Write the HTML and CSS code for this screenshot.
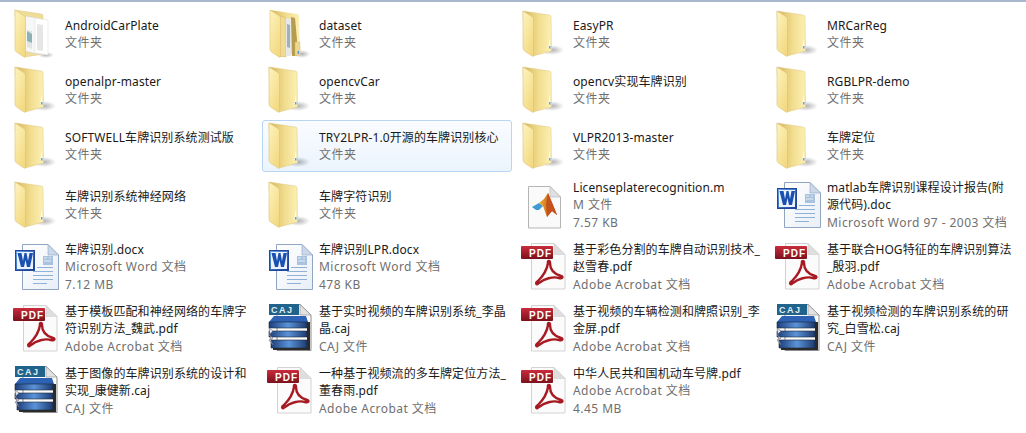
FILE: index.html
```html
<!DOCTYPE html>
<html lang="zh">
<head>
<meta charset="utf-8">
<title>车牌识别</title>
<link rel="stylesheet" href="styles.css">
</head>
<body>
<svg class="defs" width="0" height="0">
<defs>
<linearGradient id="ff" x1="0" y1="0" x2=".7" y2="1"><stop offset="0" stop-color="#fef4bf"/><stop offset="1" stop-color="#f3d981"/></linearGradient>
<linearGradient id="fi" x1="0" y1="0" x2="1" y2="0"><stop offset="0" stop-color="#d2b55a"/><stop offset=".55" stop-color="#f2dd8e"/><stop offset="1" stop-color="#fbf0b6"/></linearGradient>
<linearGradient id="bar" x1="0" y1="0" x2="0" y2="1"><stop offset="0" stop-color="#c92c3c"/><stop offset="1" stop-color="#7c101c"/></linearGradient>
<linearGradient id="wd" x1="0" y1="0" x2="1" y2="1"><stop offset="0" stop-color="#6aa5e8"/><stop offset="1" stop-color="#123f9c"/></linearGradient>
<linearGradient id="st" x1="0" y1="0" x2="1" y2="0"><stop offset="0" stop-color="#1d3f7c"/><stop offset=".5" stop-color="#5b93d8"/><stop offset="1" stop-color="#1c3a70"/></linearGradient>
<linearGradient id="ml" x1="0" y1="0" x2="1" y2="0"><stop offset="0" stop-color="#f0b030"/><stop offset="1" stop-color="#a8341a"/></linearGradient>
<linearGradient id="pg" x1="0" y1="0" x2="1" y2="1"><stop offset="0" stop-color="#ffffff"/><stop offset="1" stop-color="#e9eff7"/></linearGradient>
<radialGradient id="sh"><stop offset="0" stop-color="#000" stop-opacity=".3"/><stop offset="1" stop-color="#000" stop-opacity="0"/></radialGradient>

<symbol id="folder" viewBox="0 0 48 48" overflow="visible">
<ellipse cx="29" cy="40" rx="12" ry="5" fill="url(#sh)"/>
<path d="M0 1 L26 5 Q28 5 28 7 L28.500 41 L10 46 L0 8Z" fill="url(#fi)" stroke="#dcc680" stroke-width=".5"/>
<path d="M26.500 29 L27.500 38 L25.500 38Z" fill="#fff"/>
<rect x="26" y="36" width="1.500" height="2.500" fill="#5aa0e0"/>
<path d="M0 1 L8 6 Q10.500 7 10.500 9 L10.500 45 Q10.500 47 9 46 L1.500 41 Q0 40 0 38Z" fill="url(#ff)" stroke="#dcc377" stroke-width=".6"/>
</symbol>

<symbol id="folder-doc" viewBox="0 0 48 48" overflow="visible">
<ellipse cx="31" cy="45" rx="8" ry="3" fill="url(#sh)"/>
<path d="M0 0 L26 4 Q28 4 28 6 L28 44 L10 47 L0 6Z" fill="#efdc97" stroke="#dcc680" stroke-width=".5"/>
<path d="M10 6 L22 8 L22 44 L10 41Z" fill="#f7f7f7" stroke="#cfcfcf" stroke-width=".5"/>
<path d="M20 8 L33 10 L33 45 L20 43Z" fill="#fff" stroke="#dadada" stroke-width=".5"/>
<path d="M22 14 L28 15 L28 41 L22 40Z" fill="#e6e6e6"/>
<path d="M12 20 L17 21 L17 39 L12 37Z" fill="#e4e4e4"/>
<path d="M12 21 L17 24 L17 33 L12 31Z" fill="#8db2b6"/>
<path d="M0 0 L8 5 Q10.500 6 10.500 8 L10.500 46 Q10.500 48 9 47 L1.500 42 Q0 41 0 39Z" fill="url(#ff)" stroke="#dcc377" stroke-width=".6"/>
</symbol>

<symbol id="folder-set" viewBox="0 0 48 48" overflow="visible">
<ellipse cx="33" cy="44" rx="8" ry="4" fill="url(#sh)"/>
<path d="M1 0 L28 4 Q30 4 30 6 L31 43 L11 47 L1 6Z" fill="url(#fi)"/>
<path d="M11 6 L17 8 L17 47 L11 46Z" fill="#f0db91" stroke="#cfb560" stroke-width=".5"/>
<path d="M17 8 L22 9 L22 46 L17 46Z" fill="#e8e8e8"/>
<path d="M18 14 L21 15 L21 38 L18 37Z" fill="#9eb0b8"/>
<path d="M22 7 L26 8 L28 30 L28 46 L23 46Z" fill="#b59c4e"/>
<path d="M26 32 L31 32 L31 45 L26 46Z" fill="#eed88e" stroke="#cfb560" stroke-width=".4"/>
<rect x="28.500" y="41" width="1.500" height="3" fill="#5aa0e0"/>
<path d="M1 0 L9 5 Q11.500 6 11.500 8 L11.500 46 Q11.500 48 10 47 L2.500 42 Q1 41 1 39Z" fill="url(#ff)" stroke="#dcc377" stroke-width=".6"/>
</symbol>

<symbol id="word" viewBox="0 0 48 48" overflow="visible">
<path d="M7.500 1.500 H33 L43.500 12 V46.500 H7.500Z" fill="url(#pg)" stroke="#8fa5c2"/>
<path d="M33 1.500 V12 H43.500Z" fill="#cbd8e9" stroke="#8fa5c2" stroke-width=".6"/>
<rect x="28" y="13" width="10" height="9" fill="#a9c2de"/>
<path d="M29 15 h3 M34 15 h2 M29 18 h7" stroke="#e4edf6" stroke-width="1"/>
<path d="M22 24.500 H38 M18 28.500 H38 M18 32.500 H38 M18 36.500 H38 M18 40.500 H32" stroke="#8fb0d9" stroke-width="1"/>
<rect x=".5" y="7.500" width="19" height="20" fill="url(#wd)" stroke="#23489a"/>
<rect x="2" y="9" width="16" height="17" fill="#eaf2fb"/>
<path d="M2.500 10 L6 24 H9 L10.500 17 L12 24 H15 L18 10 H14.500 L13 18 L11.500 10 H9.500 L8 18 L6.500 10Z" fill="#1a50b0"/>
</symbol>

<symbol id="pdf" viewBox="0 0 48 48" overflow="visible">
<path d="M8.500 .5 H31 L42 11.500 V46 H8.500Z" fill="#fbfbfb" stroke="#d2d2d2"/>
<path d="M31 .5 V11.500 H42Z" fill="#dedede" stroke="#d2d2d2" stroke-width=".6"/>
<rect x="-2" y="3" width="32" height="13" rx="1" fill="url(#bar)"/>
<path d="M25 20 C24 17.500 27.500 17 27 20 C27 26 31 31 38 33 C41 34 39 36 36 35 C30 33 21 36 16 40 C13 43 12 40 15 38 C20 33 24 27 25 20Z" fill="none" stroke="#a81a22" stroke-width="2.400"/>
</symbol>

<symbol id="caj" viewBox="0 0 48 48" overflow="visible">
<path d="M8 -.5 H31 L42 10 V45.500 H8Z" fill="#fcfcfc" stroke="#8d8d8d"/>
<path d="M31 -.5 V10 H42Z" fill="#e2e2e2" stroke="#8d8d8d" stroke-width=".6"/>
<rect x="0" y="-1" width="30" height="11" fill="#20648c"/>
<path d="M0 17 L5 11 H37 L39 17Z" fill="#2e62b4"/>
<path d="M0 17 H38 V23 H0Z" fill="url(#st)" stroke="#1a2533" stroke-width=".6"/>
<path d="M0 26 H38 V32 H0Z" fill="url(#st)" stroke="#1a2533" stroke-width=".6"/>
<path d="M2 35 H38 V43 H2Z" fill="url(#st)" stroke="#1a2533" stroke-width=".6"/>
<path d="M0 23 L4 26 L0 30 L4 33 L0 35 L4 40 L2 36Z" fill="#dfe6ee" stroke="#667" stroke-width=".6"/>
<path d="M38 17 H41 V45 H4 V43 H38Z" fill="#2a2a2a"/>
</symbol>

<symbol id="matlab" viewBox="0 0 48 48" overflow="visible">
<path d="M5.500 5.500 H27 L37.500 16 V47 H5.500Z" fill="#fafafa" stroke="#b5b5b5"/>
<path d="M27 5.500 V16 H37.500Z" fill="#e0e0e0" stroke="#b5b5b5" stroke-width=".6"/>
<path d="M9 26 L16 22 L20 25 L16 29 L13 29Z" fill="#3f9ad6"/>
<path d="M16 22 L21 18 L25 12 L30 24 L34 34 L29 30 L24 36 L20 25Z" fill="url(#ml)"/>
<path d="M25 12 L23 24 L24 36 L29 30 L34 34 L30 24Z" fill="#c6521b"/>
</symbol>
</defs>
</svg>

<main class="view">
<div class="item"><svg class="ico"><use href="#folder-doc"/></svg><div class="txt"><div class="nm">AndroidCarPlate</div><div class="sub">文件夹</div></div></div>
<div class="item"><svg class="ico"><use href="#folder-set"/></svg><div class="txt"><div class="nm">dataset</div><div class="sub">文件夹</div></div></div>
<div class="item"><svg class="ico"><use href="#folder"/></svg><div class="txt"><div class="nm">EasyPR</div><div class="sub">文件夹</div></div></div>
<div class="item"><svg class="ico"><use href="#folder"/></svg><div class="txt"><div class="nm">MRCarReg</div><div class="sub">文件夹</div></div></div>

<div class="item"><svg class="ico"><use href="#folder"/></svg><div class="txt"><div class="nm">openalpr-master</div><div class="sub">文件夹</div></div></div>
<div class="item"><svg class="ico"><use href="#folder"/></svg><div class="txt"><div class="nm">opencvCar</div><div class="sub">文件夹</div></div></div>
<div class="item"><svg class="ico"><use href="#folder"/></svg><div class="txt"><div class="nm">opencv实现车牌识别</div><div class="sub">文件夹</div></div></div>
<div class="item"><svg class="ico"><use href="#folder"/></svg><div class="txt"><div class="nm">RGBLPR-demo</div><div class="sub">文件夹</div></div></div>

<div class="item"><svg class="ico"><use href="#folder"/></svg><div class="txt"><div class="nm">SOFTWELL车牌识别系统测试版</div><div class="sub">文件夹</div></div></div>
<div class="item sel"><svg class="ico"><use href="#folder"/></svg><div class="txt"><div class="nm">TRY2LPR-1.0开源的车牌识别核心</div><div class="sub">文件夹</div></div></div>
<div class="item"><svg class="ico"><use href="#folder"/></svg><div class="txt"><div class="nm">VLPR2013-master</div><div class="sub">文件夹</div></div></div>
<div class="item"><svg class="ico"><use href="#folder"/></svg><div class="txt"><div class="nm">车牌定位</div><div class="sub">文件夹</div></div></div>

<div class="item"><svg class="ico"><use href="#folder"/></svg><div class="txt"><div class="nm">车牌识别系统神经网络</div><div class="sub">文件夹</div></div></div>
<div class="item"><svg class="ico"><use href="#folder"/></svg><div class="txt"><div class="nm">车牌字符识别</div><div class="sub">文件夹</div></div></div>
<div class="item"><svg class="ico"><use href="#matlab"/></svg><div class="txt"><div class="nm">Licenseplaterecognition.m</div><div class="sub">M 文件</div><div class="sub">7.57 KB</div></div></div>
<div class="item"><svg class="ico"><use href="#word"/></svg><div class="txt"><div class="nm">matlab车牌识别课程设计报告(附<br>源代码).doc</div><div class="sub">Microsoft Word 97 - 2003 文档</div></div></div>

<div class="item"><svg class="ico"><use href="#word"/></svg><div class="txt"><div class="nm">车牌识别.docx</div><div class="sub">Microsoft Word 文档</div><div class="sub">7.12 MB</div></div></div>
<div class="item"><svg class="ico"><use href="#word"/></svg><div class="txt"><div class="nm">车牌识别LPR.docx</div><div class="sub">Microsoft Word 文档</div><div class="sub">478 KB</div></div></div>
<div class="item"><svg class="ico"><use href="#pdf"/><text x="6" y="13.500" class="bar-t">PDF</text></svg><div class="txt"><div class="nm">基于彩色分割的车牌自动识别技术_<br>赵雪春.pdf</div><div class="sub">Adobe Acrobat 文档</div></div></div>
<div class="item"><svg class="ico"><use href="#pdf"/><text x="6" y="13.500" class="bar-t">PDF</text></svg><div class="txt"><div class="nm">基于联合HOG特征的车牌识别算法<br>_殷羽.pdf</div><div class="sub">Adobe Acrobat 文档</div></div></div>

<div class="item"><svg class="ico"><use href="#pdf"/><text x="6" y="13.500" class="bar-t">PDF</text></svg><div class="txt"><div class="nm">基于模板匹配和神经网络的车牌字<br>符识别方法_魏武.pdf</div><div class="sub">Adobe Acrobat 文档</div></div></div>
<div class="item"><svg class="ico"><use href="#caj"/><text x="2" y="8" class="caj-t">CAJ</text></svg><div class="txt"><div class="nm">基于实时视频的车牌识别系统_李晶<br>晶.caj</div><div class="sub">CAJ 文件</div></div></div>
<div class="item"><svg class="ico"><use href="#pdf"/><text x="6" y="13.500" class="bar-t">PDF</text></svg><div class="txt"><div class="nm">基于视频的车辆检测和牌照识别_李<br>金屏.pdf</div><div class="sub">Adobe Acrobat 文档</div></div></div>
<div class="item"><svg class="ico"><use href="#caj"/><text x="2" y="8" class="caj-t">CAJ</text></svg><div class="txt"><div class="nm">基于视频检测的车牌识别系统的研<br>究_白雪松.caj</div><div class="sub">CAJ 文件</div></div></div>

<div class="item"><svg class="ico"><use href="#caj"/><text x="2" y="8" class="caj-t">CAJ</text></svg><div class="txt"><div class="nm">基于图像的车牌识别系统的设计和<br>实现_康健新.caj</div><div class="sub">CAJ 文件</div></div></div>
<div class="item"><svg class="ico"><use href="#pdf"/><text x="6" y="13.500" class="bar-t">PDF</text></svg><div class="txt"><div class="nm">一种基于视频流的多车牌定位方法_<br>董春雨.pdf</div><div class="sub">Adobe Acrobat 文档</div></div></div>
<div class="item"><svg class="ico"><use href="#pdf"/><text x="6" y="13.500" class="bar-t">PDF</text></svg><div class="txt"><div class="nm">中华人民共和国机动车号牌.pdf</div><div class="sub">Adobe Acrobat 文档</div><div class="sub">4.45 MB</div></div></div>
</main>
</body>
</html>
```
FILE: styles.css
```css
* { box-sizing: border-box; }
html, body { margin: 0; height: 100%; overflow: hidden; background: #fff; }
body { border-top: 2px solid #a9b7cc; font-family: "Noto Sans", "Noto Sans CJK SC", sans-serif; font-size: 12px; letter-spacing: .1px; }
.defs { display: block; height: 0; }
.view {
  display: grid;
  grid-template-columns: repeat(4, 250px);
  grid-template-rows: 52px 52px 52px 58px 58px 58px 58px;
  gap: 4px;
  padding: 6px 0 0 8px;
}
.item {
  display: flex;
  align-items: center;
  gap: 2px;
  padding-left: 6px;
  border: 1px solid transparent;
  border-radius: 3px;
}
.sel { border-color: #b8d6f4; background: linear-gradient(#fafcff, #ebf4fd); }
.ico { width: 48px; height: 48px; flex: none; overflow: visible; }
.txt { line-height: 17.5px; min-width: 0; white-space: nowrap; }
.nm { color: #1a1a1a; }
.sub { color: #6f6f6f; letter-spacing: .45px; }
.bar-t { font: bold 10px "Liberation Sans", sans-serif; fill: #fff; letter-spacing: 1px; }
.caj-t { font: bold 9px "Liberation Sans", sans-serif; fill: #e4eef5; letter-spacing: 1.500px; }
```
